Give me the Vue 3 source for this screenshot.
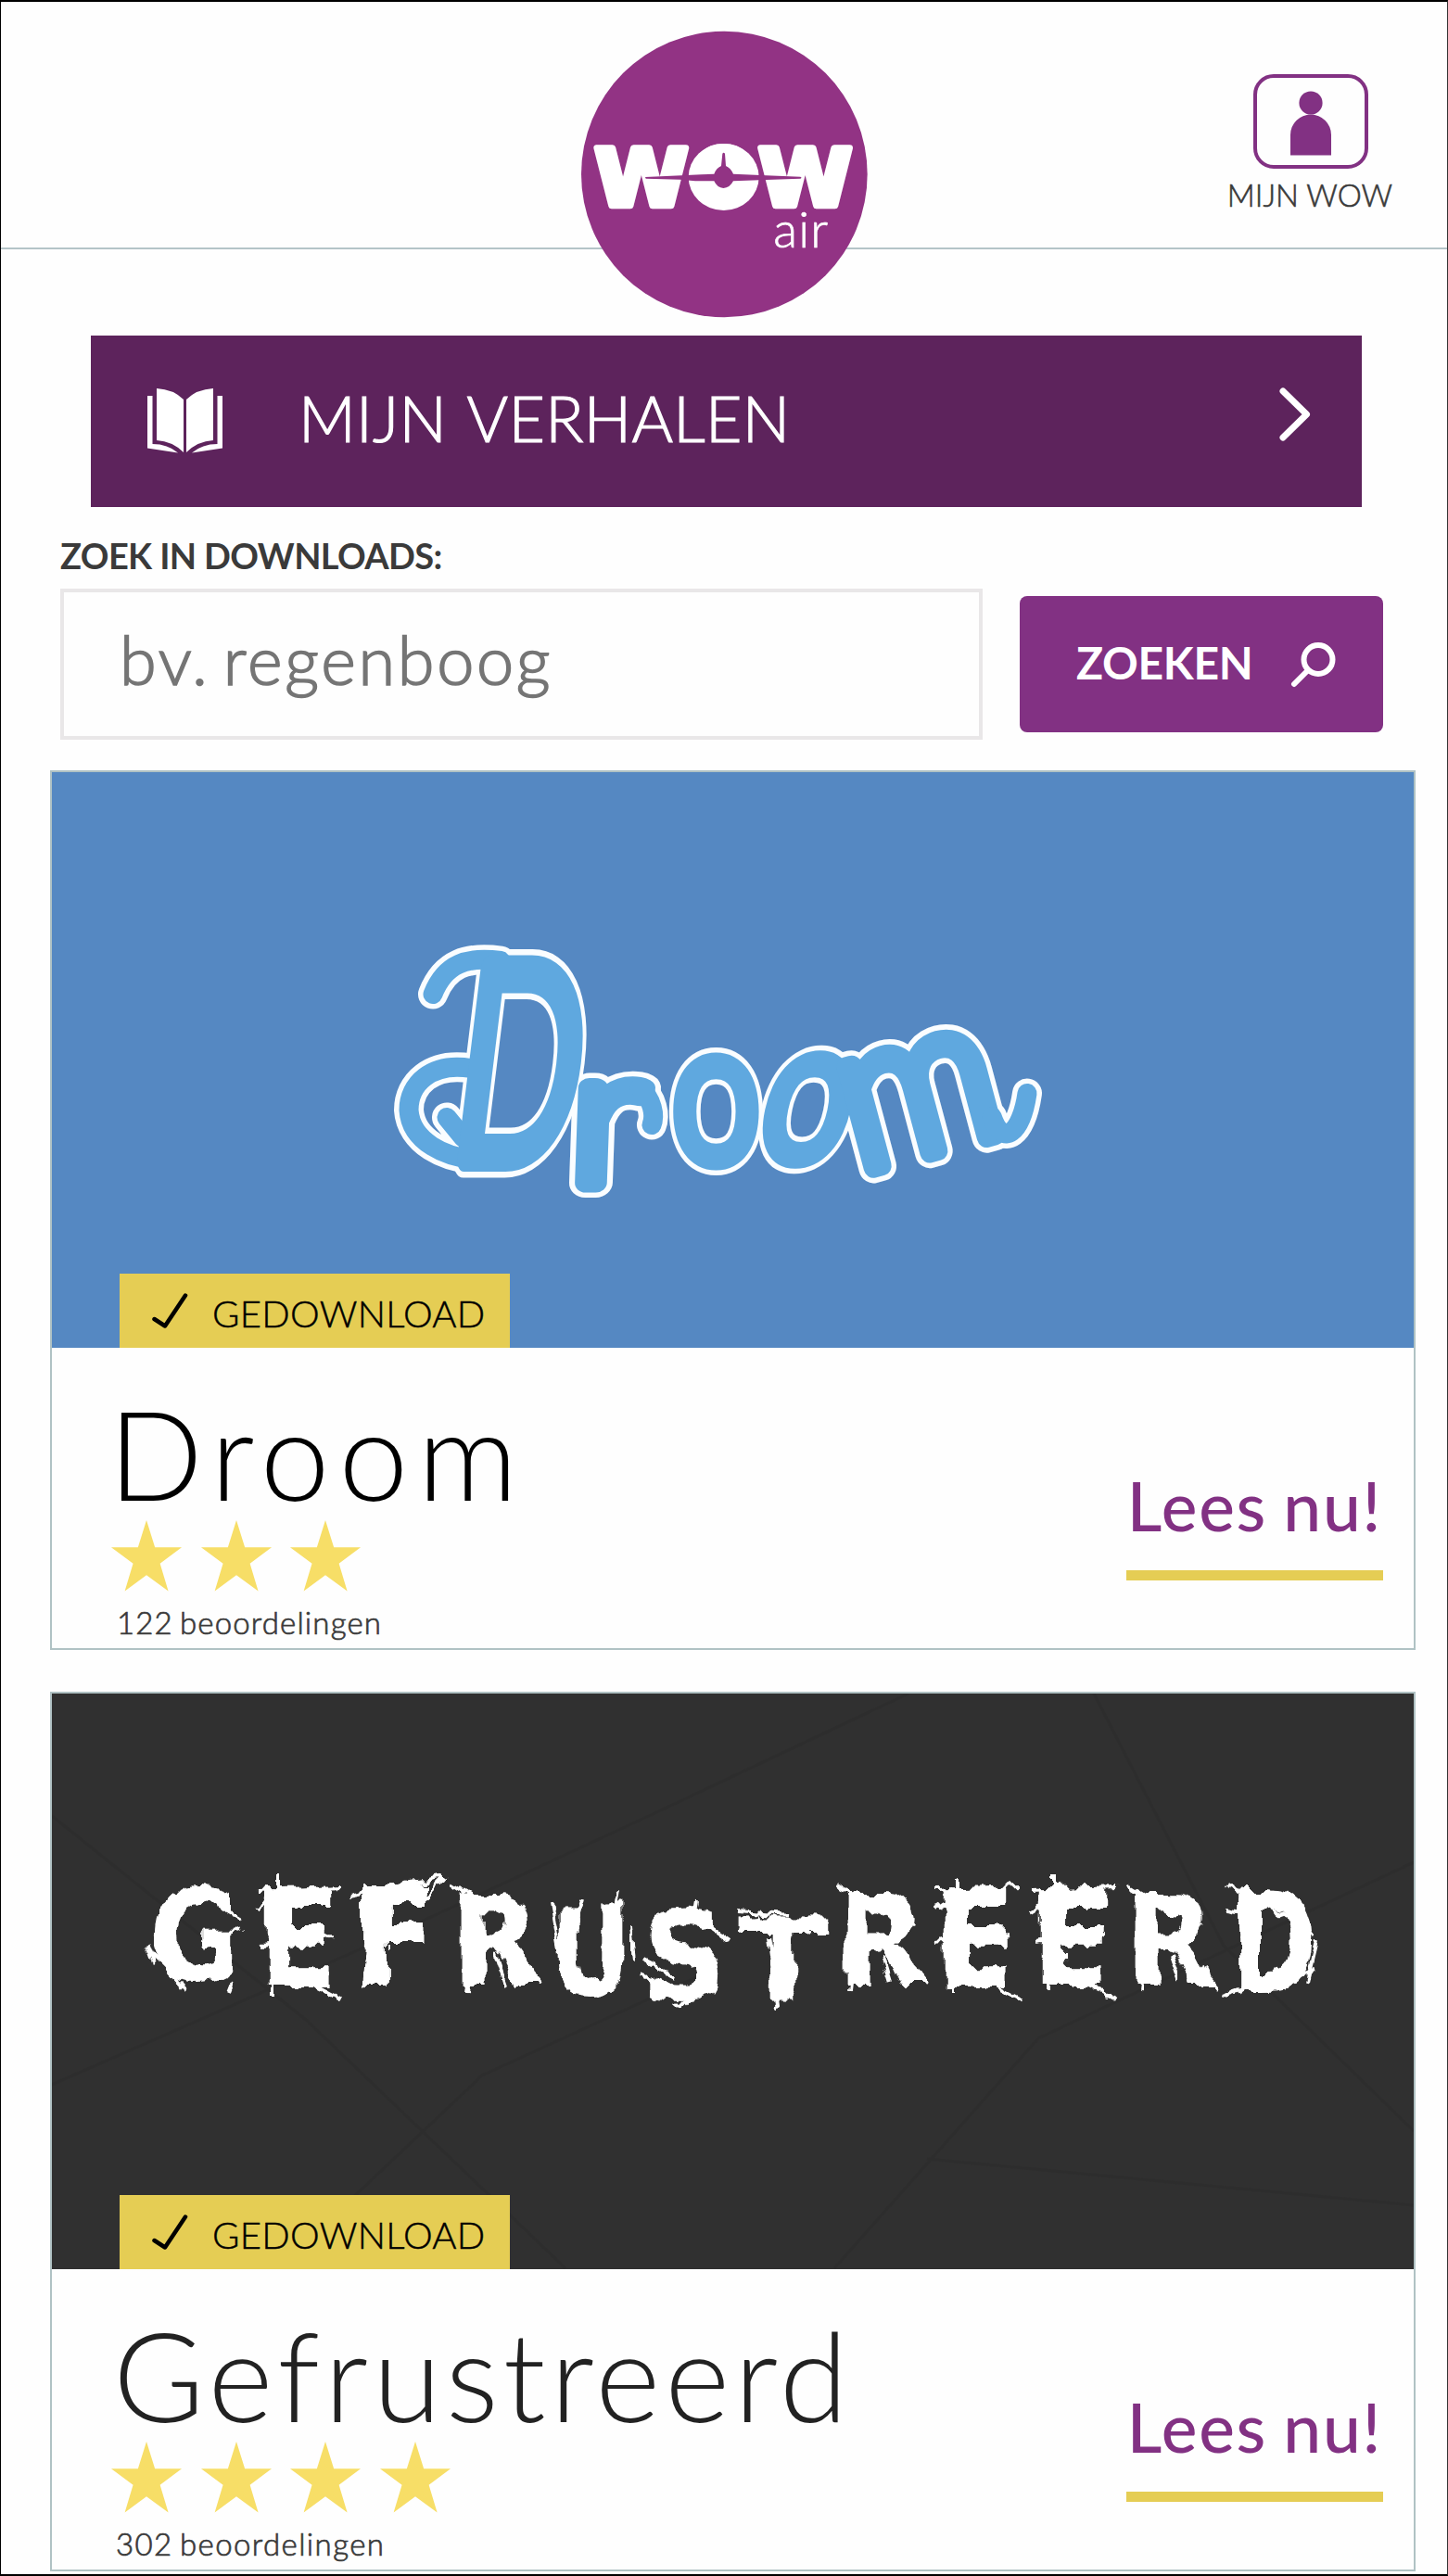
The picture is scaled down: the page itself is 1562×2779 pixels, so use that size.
<script setup>
const stories = [
  { id: 'droom', title: 'Droom', stars: 3, count: '122 beoordelingen' },
  { id: 'gefrustreerd', title: 'Gefrustreerd', stars: 4, count: '302 beoordelingen' },
]

// Scratch-lettered cover: x, baseline, width and cap height per letter
const scratch = [
  ['G', 162, 2138, 98, 100], ['E', 276, 2144, 88, 106], ['F', 382, 2142, 90, 108],
  ['R', 486, 2142, 98, 98], ['U', 594, 2153, 86, 98], ['S', 690, 2158, 96, 98],
  ['T', 797, 2158, 96, 90], ['R', 901, 2142, 98, 98], ['E', 1008, 2144, 88, 106],
  ['E', 1112, 2144, 88, 106], ['R', 1213, 2142, 98, 98], ['D', 1328, 2148, 92, 108],
]

const scratches = [
  'M166 2110L205 2150M205 2038L262 2072M252 2142L248 2152M160 2098L168 2120M216 2100L262 2082',
  'M301 2025V2060M276 2040L369 2037M276 2062L300 2046M280 2098L358 2088M330 2138L368 2158M294 2154V2130',
  'M378 2046L480 2026L460 2048M392 2142L396 2100M400 2094L455 2088',
  'M488 2034L520 2054L570 2080M502 2149L506 2115M536 2110L546 2140M556 2110L584 2144',
  'M594 2054L604 2110M628 2046L618 2080M666 2042L660 2080M680 2080L684 2114',
  'M752 2052L750 2064M736 2060L788 2096M692 2130L745 2152L731 2167M694 2116L730 2134',
  'M798 2062L850 2066M796 2084L820 2068M828 2090L838 2164L833 2170M854 2072L874 2090',
  'M903 2034L935 2054L985 2080M916 2149L920 2115M952 2110L961 2140M970 2110L999 2144',
  'M1033 2025V2060M1008 2040L1101 2037M1009 2062L1034 2046M1012 2098L1088 2088M1064 2138L1102 2158M1027 2150V2130',
  'M1137 2025V2060M1112 2040L1205 2037M1113 2062L1138 2046M1116 2098L1190 2088M1166 2138L1204 2158M1130 2150V2130',
  'M1215 2034L1248 2054L1297 2080M1228 2149L1232 2115M1263 2110L1273 2140M1282 2110L1312 2144',
  'M1322 2033L1350 2048L1418 2092M1324 2062L1350 2066M1320 2154L1360 2140L1418 2126M1420 2096L1410 2138',
]

const starPoints = '39,0 48.5,30.5 78.5,30.5 54.2,48.5 63.5,79.5 39,61.5 14.7,79.5 24,48.5 -0.5,30.5 29.5,30.5'
</script>

<template>
  <div class="page">
    <header class="header">
      <svg class="logo" viewBox="0 0 1080 1050" aria-label="WOW air">
        <circle cx="544" cy="534" r="463" fill="#923384" />
        <g class="logo-word">
          <text x="124" y="637" textLength="304" lengthAdjust="spacingAndGlyphs">W</text>
          <text x="654" y="636" textLength="304" lengthAdjust="spacingAndGlyphs">W</text>
          <text class="logo-o" x="430" y="640" textLength="224" lengthAdjust="spacingAndGlyphs">O</text>
        </g>
        <ellipse cx="542" cy="543" rx="114" ry="108" fill="#fff" />
        <path
          fill="#923384"
          d="M288 543L405 538L470 535L511 533Q518 514 534 507L538 467Q542 462 546 467L549 507Q565 514 573 533L680 538L790 542Q797 545 790 548L680 552L573 556Q562 578 541 579Q521 578 511 556L450 556L400 551L290 548Z"
        />
        <text class="logo-air" x="703" y="772" textLength="176" lengthAdjust="spacing">air</text>
      </svg>
      <a class="account">
        <span class="account-icon">
          <svg viewBox="0 0 46 72">
            <circle cx="23" cy="13" r="12.6" />
            <path d="M1 69.500V47.500a22 22 0 0 1 44 0V69.500Z" />
          </svg>
        </span>
        <span class="account-label">MIJN WOW</span>
      </a>
    </header>

    <main class="content">
      <a class="stories-bar">
        <svg class="book" viewBox="0 0 81 70">
          <path d="M10 0Q28 1 39 12V69Q27 57 10 56Z" />
          <path d="M71 0Q53 1 42 12V69Q54 57 71 56Z" />
          <path d="M0 8H5.500V60Q22 60 33 69.500L0 64.500Z" />
          <path d="M81 8H75.500V60Q59 60 48 69.500L81 64.500Z" />
        </svg>
        <span class="bar-label">MIJN VERHALEN</span>
        <svg class="chevron" viewBox="0 0 34 58">
          <path d="M4 4L29.500 29L4 54" />
        </svg>
      </a>

      <form class="search" @submit.prevent>
        <label class="search-label" for="q">ZOEK IN DOWNLOADS:</label>
        <div class="search-row">
          <input id="q" class="field" type="text" placeholder="bv. regenboog" />
          <button class="button" type="submit">
            <span>ZOEKEN</span>
            <svg viewBox="0 0 50 50">
              <circle cx="30" cy="19.500" r="15.500" />
              <path d="M19 31L4 46" />
            </svg>
          </button>
        </div>
      </form>

      <article v-for="story in stories" :key="story.id" class="card" :class="story.id">
        <div class="cover">
          <svg v-if="story.id === 'droom'" class="art" viewBox="56 834 1469 620">
            <g v-for="layer in ['outer', 'inner']" :key="layer" class="bubble" :class="layer">
              <path d="M467 1073C480 1040 504 1032 540 1037" />
              <path d="M508 1153C465 1146 441 1170 441 1198C443 1230 478 1252 525 1252M482 1206L500 1228" />
              <text class="initial" transform="translate(484 1250) skewX(-7) scale(.6 1)" font-size="289">D</text>
              <text transform="translate(613 1276) skewX(-2) scale(1.12 1)" font-size="206">r</text>
              <path d="M690 1174C704 1186 707 1204 703 1214" />
              <text transform="translate(726 1251) scale(.8 1)" font-size="208">o</text>
              <text transform="translate(814 1249) skewX(-12) scale(.8 1)" font-size="208">o</text>
              <text transform="translate(925 1265) rotate(-15) scale(.96 1.03)" font-size="220">m</text>
              <path d="M1070 1205C1082 1240 1102 1222 1108 1180" />
            </g>
          </svg>
          <svg v-else class="art" viewBox="56 1828 1469 621">
            <defs>
              <filter id="rough" x="-5%" y="-20%" width="110%" height="140%">
                <feTurbulence type="fractalNoise" baseFrequency="0.06 0.025" numOctaves="3" seed="9" result="n" />
                <feDisplacementMap in="SourceGraphic" in2="n" scale="17" xChannelSelector="R" yChannelSelector="G" />
              </filter>
            </defs>
            <g class="creases">
              <path d="M56 2250L420 2090L700 1960L980 1828M300 2448L520 2240L760 2130M900 2448L1120 2200L1525 2010M1180 1828L1320 2100L1525 2300M56 1960L330 2180L610 2448M1000 2330L1525 2380" />
            </g>
            <g class="scratch" filter="url(#rough)">
              <text
                v-for="(l, i) in scratch"
                :key="i"
                :x="l[1]"
                :y="l[2]"
                :font-size="l[4] / 0.729"
                :textLength="l[3]"
                lengthAdjust="spacingAndGlyphs"
              >{{ l[0] }}</text>
              <path v-for="(d, i) in scratches" :key="'s' + i" class="scratch-line" :d="d" />
            </g>
          </svg>
          <span class="badge">
            <svg viewBox="0 0 40 38"><path d="M2.500 28L14 35.500L36 2.500" /></svg>
            <span>GEDOWNLOAD</span>
          </span>
        </div>
        <div class="info">
          <div class="details">
            <h2 class="title">{{ story.title }}</h2>
            <div class="stars">
              <svg v-for="n in story.stars" :key="n" viewBox="0 0 78 80"><polygon :points="starPoints" /></svg>
            </div>
            <p class="count">{{ story.count }}</p>
          </div>
          <a class="read">Lees nu!</a>
        </div>
      </article>
    </main>
  </div>
</template>

<style>
body {
  margin: 0;
  background: #fefefe;
}
</style>

<style scoped>
.page {
  box-sizing: border-box;
  width: 1562px;
  height: 2779px;
  overflow: hidden;
  border: solid #000;
  border-width: 2px 1px 2px 1px;
  border-right-color: #333;
  background: #fefefe;
  color: #3a3a3a;
  font-family: Lato, "Open Sans", sans-serif;
}
.header {
  position: relative;
  box-sizing: border-box;
  height: 267px;
  padding: 78px 60px 0 0;
  display: flex;
  justify-content: flex-end;
  border-bottom: 2px solid #b4c4c8;
}
.logo {
  position: absolute;
  left: 599px;
  top: 8px;
  width: 360px;
  height: 350px;
}
.logo-word {
  fill: #fff;
  stroke: #fff;
  stroke-width: 20;
  stroke-linejoin: round;
  font: bold 256px "DejaVu Sans", sans-serif;
}
.logo-word .logo-o {
  stroke: none;
  font-size: 270px;
}
.logo-air {
  fill: #fff;
  stroke: #fff;
  stroke-width: 2;
  font: 300 160px Lato, sans-serif;
}
.account {
  width: 176px;
  display: flex;
  flex-direction: column;
  align-items: center;
}
.account-icon {
  box-sizing: border-box;
  width: 124px;
  height: 102px;
  margin-left: 1px;
  border: 4px solid #823183;
  border-radius: 22px;
  display: flex;
  justify-content: center;
  padding-top: 14px;
}
.account-icon svg {
  width: 46px;
  height: 72px;
  fill: #823183;
}
.account-label {
  margin-top: 11.500px;
  white-space: nowrap;
  font-size: 33px;
  line-height: 33px;
  font-weight: 300;
  -webkit-text-stroke: 0.600px;
}
.content {
  padding: 93px 0 0 53px;
}
.stories-bar {
  box-sizing: border-box;
  width: 1371px;
  height: 185px;
  margin-left: 44px;
  padding: 0 55px 0 61px;
  display: flex;
  align-items: center;
  background: #5d235c;
  color: #fff;
}
.book {
  width: 81px;
  height: 70px;
  margin-bottom: 2px;
  fill: #fff;
}
.bar-label {
  margin: 0 auto 0 82px;
  font-size: 68px;
  line-height: 68px;
  font-weight: 300;
  letter-spacing: 0.300px;
  word-spacing: 5px;
  -webkit-text-stroke: 1.200px;
  padding-bottom: 8px;
}
.chevron {
  width: 34px;
  height: 58px;
  margin-bottom: 15px;
}
.chevron path {
  fill: none;
  stroke: #fff;
  stroke-width: 7;
  stroke-linecap: round;
  stroke-linejoin: round;
}
.search {
  padding: 33px 0 0 11px;
}
.search-label {
  display: block;
  height: 55px;
  line-height: 38px;
  font-size: 38px;
  font-weight: 700;
  letter-spacing: -0.620px;
}
.search-row {
  display: flex;
  align-items: center;
  gap: 40px;
  height: 163px;
}
.field {
  box-sizing: border-box;
  width: 995px;
  height: 163px;
  padding: 0 0 12px 60px;
  border: 4px solid #e9e7e8;
  background: #fefefe;
  font: 300 72px Lato, sans-serif;
  letter-spacing: 2.700px;
  word-spacing: -8px;
  outline: none;
}
.field::placeholder {
  color: #757575;
  -webkit-text-stroke: 1.600px #757575;
  opacity: 1;
}
.button {
  width: 392px;
  height: 147px;
  padding: 0 50px 0 61px;
  display: flex;
  align-items: center;
  justify-content: space-between;
  border: 0;
  border-radius: 8px;
  background: #823183;
  color: #fff;
  font: 700 48px/48px Lato, sans-serif;
}
.button span {
  padding-bottom: 4px;
  letter-spacing: -0.300px;
}
.button svg {
  width: 50px;
  height: 50px;
}
.button svg * {
  fill: none;
  stroke: #fff;
  stroke-width: 6;
  stroke-linecap: round;
}
.card {
  box-sizing: border-box;
  width: 1473px;
  height: 949px;
  margin-bottom: 45px;
  border: 2.500px solid #b0c2c4;
}
.search + .card {
  margin-top: 33px;
}
.cover {
  height: 621px;
  display: flex;
  align-items: flex-end;
  position: relative;
}
.droom .cover {
  background: #5588c2;
}
.gefrustreerd .cover {
  background: #303030;
}
.art {
  position: absolute;
  inset: 0;
  width: 1469px;
  height: 621px;
}
.bubble {
  font-family: Lato, sans-serif;
  font-weight: 300;
  stroke-linejoin: round;
  stroke-linecap: round;
}
.bubble path {
  fill: none;
}
.outer {
  fill: #fff;
  stroke: #fafdff;
  stroke-width: 32;
}
.inner {
  fill: #5fa8df;
  stroke: #5fa8df;
  stroke-width: 21;
}
.outer .initial {
  stroke-width: 42;
}
.inner .initial {
  stroke-width: 29;
}
.creases path {
  fill: none;
  stroke: #2a2a2a;
  stroke-width: 3;
  opacity: 0.4;
}
.scratch {
  fill: #fff;
  font-family: "DejaVu Sans", sans-serif;
  font-weight: bold;
}
.scratch-line {
  fill: none;
  stroke: #fff;
  stroke-width: 4;
}
.badge {
  position: relative;
  box-sizing: border-box;
  width: 420.500px;
  height: 80px;
  margin-left: 73px;
  padding: 0 0 0 35px;
  display: flex;
  align-items: center;
  background: #e5cd54;
  color: #000;
  font-size: 40px;
  line-height: 40px;
  font-weight: 300;
  letter-spacing: 0.300px;
  -webkit-text-stroke: 0.500px;
  white-space: nowrap;
}
.badge svg {
  width: 40px;
  height: 38px;
  margin-right: 25px;
}
.badge path {
  fill: none;
  stroke: #000;
  stroke-width: 4.500;
  stroke-linecap: round;
  stroke-linejoin: round;
}
.badge span {
  padding-top: 5px;
}
.info {
  display: flex;
  justify-content: space-between;
  align-items: flex-start;
  padding: 45px 33px 0 63px;
}
.title {
  margin: 0;
  padding-top: 2px;
  font-size: 134px;
  line-height: 134px;
  height: 139px;
  font-weight: 300;
  white-space: nowrap;
}
.droom .title {
  margin-left: -2px;
  color: #000;
  letter-spacing: 10px;
}
.gefrustreerd .title {
  margin-left: 3px;
  color: #222;
  letter-spacing: 5px;
}
.stars {
  display: flex;
  gap: 18.500px;
  height: 80px;
}
.stars svg {
  width: 78px;
  height: 77px;
  overflow: visible;
  fill: #f7de67;
}
.count {
  margin: 14px 0 0 7px;
  font-size: 33px;
  line-height: 33px;
  font-weight: 300;
  letter-spacing: 1.150px;
  word-spacing: -3px;
  -webkit-text-stroke: 0.700px;
  white-space: nowrap;
}
.gefrustreerd .count {
  margin-left: 6px;
  letter-spacing: 1.400px;
}
.read {
  width: 277px;
  height: 206px;
  box-sizing: border-box;
  padding-top: 87px;
  border-bottom: 11px solid #e5cd54;
  text-align: center;
  white-space: nowrap;
  color: #823183;
  font-size: 73px;
  line-height: 76px;
  font-weight: 500;
  letter-spacing: 1.800px;
  word-spacing: -3px;
}
</style>
